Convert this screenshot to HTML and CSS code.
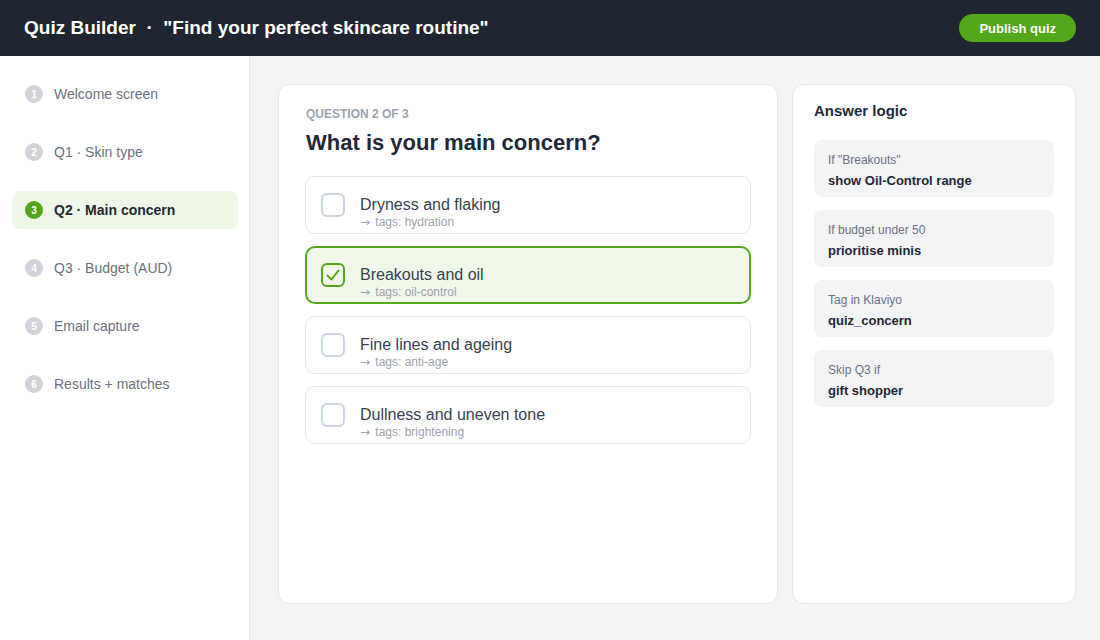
FILE: index.html
```html
<!DOCTYPE html>
<html lang="en">
<head>
  <meta charset="UTF-8"/>
  <meta name="viewport" content="width=device-width, initial-scale=1.0"/>
  <title>Quiz Builder</title>
  <link rel="stylesheet" href="styles.css">
</head>
<body>

  <!-- TOP BAR -->
  <header class="topbar">
    <h1 class="topbar-title">Quiz Builder &nbsp;·&nbsp; "Find your perfect skincare routine"</h1>
    <button class="publish-btn">Publish quiz</button>
  </header>

  <div class="layout">

    <!-- STEPS -->
    <aside class="steps">
      <div class="step"><span class="step-num">1</span>Welcome screen</div>
      <div class="step"><span class="step-num">2</span>Q1 · Skin type</div>
      <div class="step active"><span class="step-num">3</span>Q2 · Main concern</div>
      <div class="step"><span class="step-num">4</span>Q3 · Budget (AUD)</div>
      <div class="step"><span class="step-num">5</span>Email capture</div>
      <div class="step"><span class="step-num">6</span>Results + matches</div>
    </aside>

    <!-- EDITOR -->
    <main class="editor">
      <section class="question-card">
        <p class="question-kicker">Question 2 of 3</p>
        <h2 class="question-title">What is your main concern?</h2>

        <div class="options">
          <div class="option">
            <span class="checkbox"></span>
            <div class="option-text">
              <span class="option-label">Dryness and flaking</span>
              <span class="option-tag"><span class="arrow">→</span> tags: hydration</span>
            </div>
          </div>
          <div class="option selected">
            <span class="checkbox">
              <svg width="16" height="16" viewBox="0 0 16 16"><path d="M2.5 8.5 L6.5 12.5 L13.5 3.5" fill="none" stroke="#52a818" stroke-width="2" stroke-linecap="round" stroke-linejoin="round"/></svg>
            </span>
            <div class="option-text">
              <span class="option-label">Breakouts and oil</span>
              <span class="option-tag"><span class="arrow">→</span> tags: oil-control</span>
            </div>
          </div>
          <div class="option">
            <span class="checkbox"></span>
            <div class="option-text">
              <span class="option-label">Fine lines and ageing</span>
              <span class="option-tag"><span class="arrow">→</span> tags: anti-age</span>
            </div>
          </div>
          <div class="option">
            <span class="checkbox"></span>
            <div class="option-text">
              <span class="option-label">Dullness and uneven tone</span>
              <span class="option-tag"><span class="arrow">→</span> tags: brightening</span>
            </div>
          </div>
        </div>
      </section>

      <aside class="logic-panel">
        <h3 class="logic-title">Answer logic</h3>
        <div class="rule">
          <span class="rule-if">If "Breakouts"</span>
          <span class="rule-then">show Oil-Control range</span>
        </div>
        <div class="rule">
          <span class="rule-if">If budget under 50</span>
          <span class="rule-then">prioritise minis</span>
        </div>
        <div class="rule">
          <span class="rule-if">Tag in Klaviyo</span>
          <span class="rule-then">quiz_concern</span>
        </div>
        <div class="rule">
          <span class="rule-if">Skip Q3 if</span>
          <span class="rule-then">gift shopper</span>
        </div>
      </aside>
    </main>

  </div>

</body>
</html>
```

FILE: styles.css
```css
* {
  margin: 0;
  padding: 0;
  box-sizing: border-box;
}

body {
  font-family: 'Liberation Sans', Arial, sans-serif;
  background: #f3f4f6;
  color: #1f2937;
  width: 1100px;
  height: 640px;
  overflow: hidden;
}

.topbar {
  height: 56px;
  background: #1f2631;
  display: flex;
  align-items: center;
  justify-content: space-between;
  padding: 0 24px;
}

.topbar-title {
  color: #ffffff;
  font-size: 19px;
  font-weight: 700;
}

.publish-btn {
  font-family: inherit;
  background: #52a818;
  color: #ffffff;
  border: none;
  border-radius: 14px;
  height: 28px;
  padding: 0 20px;
  font-size: 13px;
  font-weight: 700;
}

.layout {
  display: flex;
  height: 584px;
}

.steps {
  width: 250px;
  background: #ffffff;
  border-right: 1px solid #e5e7eb;
  padding: 19px 11px 0 12px;
  display: flex;
  flex-direction: column;
  gap: 20px;
}

.step {
  height: 38px;
  display: flex;
  align-items: center;
  gap: 11px;
  padding: 0 13px;
  border-radius: 8px;
  font-size: 14px;
  color: #6b7280;
}

.step-num {
  width: 18px;
  height: 18px;
  border-radius: 50%;
  background: #d1d5db;
  color: #ffffff;
  font-size: 10px;
  font-weight: 700;
  display: flex;
  align-items: center;
  justify-content: center;
}

.step.active {
  background: #eff7e9;
  color: #1f2937;
  font-weight: 700;
}

.step.active .step-num {
  background: #52a818;
}

.editor {
  flex: 1;
  display: flex;
  gap: 14px;
  padding: 28px 24px 36px 28px;
}

.question-card {
  width: 500px;
  background: #ffffff;
  border: 1px solid #e5e7eb;
  border-radius: 12px;
  padding: 22px 26px;
}

.question-kicker {
  font-size: 12px;
  font-weight: 700;
  text-transform: uppercase;
  color: #9ca3af;
  margin: 0 0 9px 1px;
}

.question-title {
  font-size: 22px;
  font-weight: 700;
  color: #1f2937;
  margin: 0 0 20px 1px;
}

.options {
  display: flex;
  flex-direction: column;
  gap: 12px;
}

.option {
  height: 58px;
  display: flex;
  align-items: flex-start;
  gap: 15px;
  padding: 16px 15px 0;
  border: 1px solid #e5e7eb;
  border-radius: 10px;
  background: #ffffff;
}

.option.selected {
  border: 2px solid #52a818;
  padding: 15px 14px 0;
  background: #f0f8ea;
}

.checkbox {
  width: 24px;
  height: 24px;
  border: 2px solid #cbd5e1;
  border-radius: 6px;
  background: #ffffff;
  display: flex;
  align-items: center;
  justify-content: center;
  flex-shrink: 0;
}

.option.selected .checkbox {
  border-color: #52a818;
  background: #f0f8ea;
}

.option-text {
  display: flex;
  flex-direction: column;
  gap: 1px;
  padding-top: 3px;
}

.option-label {
  font-size: 16px;
  line-height: 18px;
  color: #374151;
}

.option-tag {
  font-size: 12px;
  line-height: 14px;
  color: #9ca3af;
}

.option-tag .arrow {
  display: inline-block;
  width: 12px;
  font-family: 'DejaVu Sans', sans-serif;
  font-size: 12px;
  line-height: 14px;
}

.logic-panel {
  width: 284px;
  background: #ffffff;
  border: 1px solid #e5e7eb;
  border-radius: 12px;
  padding: 17px 21px;
  display: flex;
  flex-direction: column;
  gap: 13px;
}

.logic-title {
  font-size: 15px;
  font-weight: 700;
  color: #1f2937;
  margin-bottom: 8px;
}

.rule {
  height: 57px;
  background: #f3f4f6;
  border-radius: 8px;
  padding: 13px 14px 0;
  display: flex;
  flex-direction: column;
  gap: 6px;
}

.rule-if {
  font-size: 12px;
  color: #6b7280;
}

.rule-then {
  font-size: 13px;
  font-weight: 700;
  color: #1f2937;
}
```
